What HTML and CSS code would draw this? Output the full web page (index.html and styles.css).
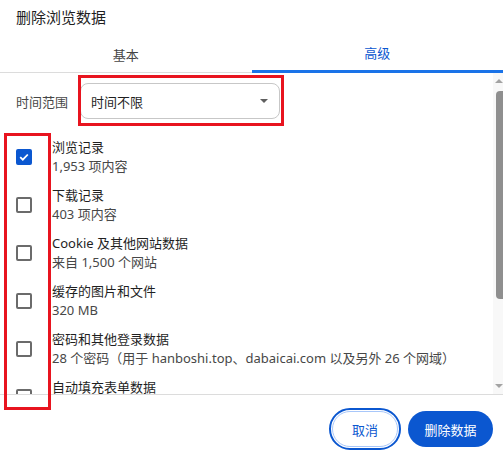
FILE: index.html
```html
<!DOCTYPE html>
<html lang="zh-CN">
<head>
    <meta charset="UTF-8">
    <meta name="viewport" content="width=device-width, initial-scale=1.0">
    <title>删除浏览数据</title>
    <link rel="stylesheet" href="styles.css">
</head>
<body>

    <div class="dialog">
        <h2 class="title">删除浏览数据</h2>

        <div class="tabs">
            <div class="tab">基本</div>
            <div class="tab active">高级</div>
        </div>

        <div class="body">
            <div class="list">
                <div class="range">
                    <span class="range-label">时间范围</span>
                    <div class="select">
                        <span>时间不限</span>
                        <span class="caret"></span>
                    </div>
                </div>

                <div class="item">
                    <span class="box checked">
                        <svg viewBox="0 0 16 16" width="16" height="16"><path d="M4.2 8.2l2.6 2.5 5-5.2" fill="none" stroke="#fff" stroke-width="1.8"/></svg>
                    </span>
                    <div class="text">
                        <div class="name">浏览记录</div>
                        <div class="sub">1,953 项内容</div>
                    </div>
                </div>
                <div class="item">
                    <span class="box"></span>
                    <div class="text">
                        <div class="name">下载记录</div>
                        <div class="sub">403 项内容</div>
                    </div>
                </div>
                <div class="item">
                    <span class="box"></span>
                    <div class="text">
                        <div class="name">Cookie 及其他网站数据</div>
                        <div class="sub">来自 1,500 个网站</div>
                    </div>
                </div>
                <div class="item">
                    <span class="box"></span>
                    <div class="text">
                        <div class="name">缓存的图片和文件</div>
                        <div class="sub">320 MB</div>
                    </div>
                </div>
                <div class="item">
                    <span class="box"></span>
                    <div class="text">
                        <div class="name">密码和其他登录数据</div>
                        <div class="sub">28 个密码（用于 hanboshi.top、dabaicai.com 以及另外 26 个网域）</div>
                    </div>
                </div>
                <div class="item">
                    <span class="box"></span>
                    <div class="text">
                        <div class="name">自动填充表单数据</div>
                        <div class="sub">&nbsp;</div>
                    </div>
                </div>
            </div>

            <div class="scrollbar">
                <span class="arrow up"></span>
                <span class="thumb"></span>
                <span class="arrow down"></span>
            </div>
        </div>

        <div class="footer">
            <button class="btn cancel">取消</button>
            <button class="btn primary">删除数据</button>
        </div>

        <!-- red annotation boxes -->
        <div class="mark mark-range"></div>
        <div class="mark mark-boxes"></div>
    </div>

</body>
</html>
```

FILE: styles.css
```css
* {
    margin: 0;
    padding: 0;
    box-sizing: border-box;
    font-family: 'Noto Sans', 'Noto Sans CJK SC', sans-serif;
}

body {
    background: #fff;
    color: #1f1f1f;
}

.dialog {
    position: relative;
    width: 503px;
    height: 461px;
    display: flex;
    flex-direction: column;
}

.title {
    height: 35px;
    padding-left: 16px;
    font-size: 15px;
    font-weight: normal;
    line-height: 34px;
    color: #1f1f1f;
}

.tabs {
    display: flex;
    height: 38px;
}

.tab {
    flex: 1;
    display: flex;
    align-items: center;
    justify-content: center;
    font-size: 13px;
    color: #444;
    border-bottom: 1px solid #dcdcdc;
    padding-top: 2px;
}

.tab.active {
    color: #0b57d0;
    border-bottom: 3px solid #1a73e8;
    padding-top: 0;
}

.body {
    display: flex;
    height: 322px;
    border-bottom: 1px solid #dcdcdc;
}

.list {
    flex: 1;
    overflow: hidden;
    padding-top: 10px;
}

.range {
    display: flex;
    align-items: center;
    height: 36px;
    padding-left: 16px;
    margin-bottom: 14px;
}

.range-label {
    font-size: 13px;
    color: #474747;
    width: 64px;
}

.select {
    width: 200px;
    height: 36px;
    border: 1px solid #c7c7c7;
    border-radius: 8px;
    display: flex;
    align-items: center;
    justify-content: space-between;
    padding: 0 11px 0 10px;
    font-size: 13px;
    color: #1f1f1f;
}

.caret {
    width: 0;
    height: 0;
    border-left: 4px solid transparent;
    border-right: 4px solid transparent;
    border-top: 4px solid #5f5f5f;
}

.item {
    display: flex;
    align-items: center;
    height: 48px;
    padding-left: 16px;
}

.box {
    width: 16px;
    height: 16px;
    border: 2px solid #6b6b6b;
    border-radius: 2px;
    margin-right: 20px;
    flex-shrink: 0;
}

.box.checked {
    background: #0b57d0;
    border-color: #0b57d0;
    position: relative;
}

.box.checked svg {
    position: absolute;
    left: -2px;
    top: -2px;
}

.name {
    font-size: 13px;
    line-height: 19px;
    color: #1f1f1f;
}

.sub {
    font-size: 13px;
    line-height: 19px;
    color: #474747;
    white-space: nowrap;
}

.scrollbar {
    width: 10px;
    background: #f8f8f8;
    display: flex;
    flex-direction: column;
    align-items: flex-end;
    padding-top: 6px;
}

.arrow {
    width: 0;
    height: 0;
    border-left: 4px solid transparent;
    border-right: 4px solid transparent;
    margin-right: 0;
}

.arrow.up {
    border-bottom: 4px solid #a3a3a3;
}

.arrow.down {
    border-top: 4px solid #a3a3a3;
    margin-top: auto;
    margin-bottom: 6px;
}

.thumb {
    width: 7px;
    height: 208px;
    margin-top: 8px;
    background: #8f8f8f;
    border-radius: 4px 0 0 4px;
}

.footer {
    flex: 1;
    display: flex;
    justify-content: flex-end;
    align-items: flex-start;
    gap: 10px;
    padding: 16px 10px 0 0;
}

.btn {
    height: 36px;
    border-radius: 18px;
    font-size: 13px;
    padding: 0 16px;
    cursor: pointer;
}

.cancel {
    width: 66px;
    background: #fff;
    color: #0b57d0;
    border: 1px solid #a8c7fa;
    outline: 2px solid #0b57d0;
    outline-offset: 1px;
}

.primary {
    width: 85px;
    background: #0b57d0;
    color: #fff;
    border: none;
}

.mark {
    position: absolute;
    border: 3px solid #e8141f;
}

.mark-range {
    left: 78px;
    top: 75px;
    width: 206px;
    height: 51px;
}

.mark-boxes {
    left: 4px;
    top: 133px;
    width: 47px;
    height: 277px;
}
```
